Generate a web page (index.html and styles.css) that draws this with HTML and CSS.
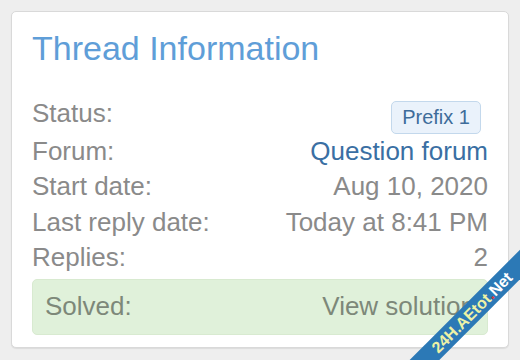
FILE: index.html
```html
<!DOCTYPE html>
<html lang="en">
<head>
<meta charset="utf-8">
<title>Thread Information</title>
<link rel="stylesheet" href="styles.css">
</head>
<body>
<div class="card">
  <h3 class="card-title">Thread Information</h3>
  <dl class="pair pair--status">
    <dt>Status:</dt>
    <dd><span class="label">Prefix 1</span></dd>
  </dl>
  <dl class="pair">
    <dt>Forum:</dt>
    <dd><a class="link" href="#">Question forum</a></dd>
  </dl>
  <dl class="pair">
    <dt>Start date:</dt>
    <dd>Aug 10, 2020</dd>
  </dl>
  <dl class="pair">
    <dt>Last reply date:</dt>
    <dd>Today at 8:41 PM</dd>
  </dl>
  <dl class="pair">
    <dt>Replies:</dt>
    <dd>2</dd>
  </dl>
  <dl class="pair pair--solved">
    <dt>Solved:</dt>
    <dd>View solution</dd>
  </dl>
</div>
<div class="ribbon-clip">
  <div class="ribbon"><span class="r-yellow">24H.AEtot</span><span class="r-red">.</span><span class="r-white">Net</span></div>
</div>
</body>
</html>
```

FILE: styles.css
```css
html, body {
  margin: 0;
  padding: 0;
  overflow: hidden;
  height: 100%;
}
body {
  background: #eeeeee;
  font-family: "Liberation Sans", Arial, sans-serif;
}
.card {
  margin: 11px;
  background: #ffffff;
  border: 1px solid #d9d9d9;
  border-radius: 5px;
  box-shadow: 0 1px 1px rgba(0, 0, 0, 0.08);
  padding: 16px 20px 12px 20px;
}
.card-title {
  margin: 0 0 27px 0;
  font-size: 34px;
  line-height: 40.8px;
  font-weight: normal;
  color: #5f9ed8;
}
.pair {
  display: flex;
  justify-content: space-between;
  margin: 0;
  font-size: 26px;
  line-height: 35.36px;
  color: #8a8a8a;
}
.pair dt, .pair dd {
  margin: 0;
  white-space: nowrap;
}
.label {
  display: inline-block;
  vertical-align: -2px;
  margin-right: 7px;
  font-size: 20px;
  line-height: 23px;
  padding: 4px 10px;
  border: 1px solid #c3d8ec;
  border-radius: 5px;
  background: #eaf2fb;
  color: #3e6c9a;
}
.link {
  color: #3a6fa3;
  text-decoration: none;
}
.pair--solved {
  margin-top: 4px;
  padding: 10px 12px;
  background: #e0f1da;
  border: 1px solid #d8ead0;
  border-radius: 5px;
  line-height: 33.36px;
  color: #7d8879;
}
.ribbon-clip {
  position: fixed;
  left: 0;
  top: 0;
  width: 520px;
  height: 360px;
  overflow: hidden;
  pointer-events: none;
}
.ribbon {
  position: absolute;
  left: 322px;
  top: 302px;
  width: 300px;
  height: 21px;
  line-height: 21px;
  transform: rotate(-45deg);
  background: #2c79b6;
  text-align: center;
  font-family: "Liberation Sans", Arial, sans-serif;
  font-weight: bold;
  font-size: 16px;
}
.r-yellow { color: #eef2a6; }
.r-red { color: #e23a3a; }
.r-white { color: #ffffff; }
```
